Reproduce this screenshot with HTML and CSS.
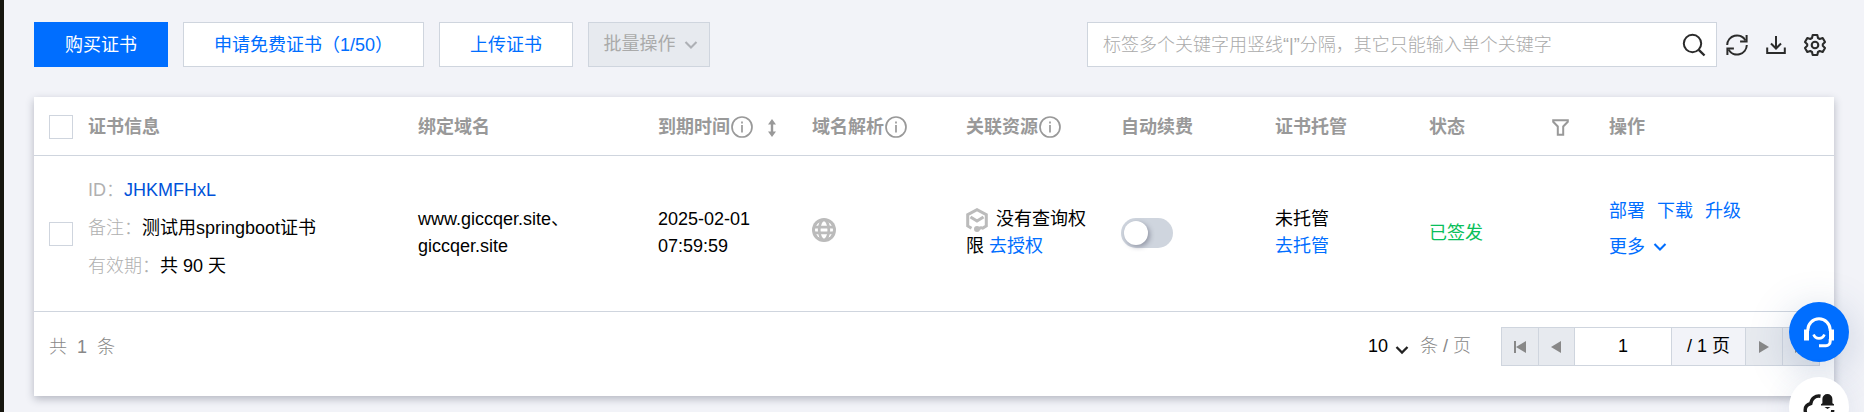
FILE: index.html
```html
<!DOCTYPE html>
<html lang="zh-CN">
<head>
<meta charset="utf-8">
<title>证书管理</title>
<link rel="stylesheet" href="styles.css">
</head>
<body>
<main class="page">
  <div class="toolbar">
    <button class="btn btn-primary">购买证书</button>
    <button class="btn btn-free">申请免费证书（1/50）</button>
    <button class="btn">上传证书</button>
    <button class="btn btn-disabled">批量操作
      <svg width="14" height="10" viewBox="0 0 14 10"><path d="M1.5 2l5.5 5.5L12.5 2" fill="none" stroke="#adb0b5" stroke-width="2.1"/></svg>
    </button>
    <div class="search">
      <span>标签多个关键字用竖线“|”分隔，其它只能输入单个关键字</span>
      <svg width="24" height="24" viewBox="0 0 24 24" fill="none" stroke="#2b2b2b" stroke-width="2"><circle cx="10.5" cy="10.5" r="8.7"/><path d="M16.8 16.8l5.7 5.7" stroke-width="2.4"/></svg>
    </div>
    <svg class="tool t-refresh" width="24" height="24" viewBox="0 0 24 24" fill="none" stroke="#2b2b2b" stroke-width="2"><path d="M2.2 12A9.8 9.8 0 0 1 20.5 7.4"/><path d="M21.8 12A9.8 9.8 0 0 1 3.5 16.6"/><path d="M21.600 2v6.500h-6.500"/><path d="M2.400 22v-6.500h6.500"/></svg>
    <svg class="tool t-download" width="20" height="20" viewBox="0 0 20 20" fill="none" stroke="#2b2b2b" stroke-width="2"><path d="M1.200 12.500v5.500h17.600v-5.500"/><path d="M10 1v12.500M5 8.500l5 5 5-5"/></svg>
    <svg class="tool t-gear" width="24" height="24" viewBox="0 0 24 24" fill="none" stroke="#2b2b2b" stroke-width="2.100" stroke-linejoin="round"><path d="M9.700 2h4.600l.7 3 1.700 1 3-.9 2.300 4-2.200 2.100v1.600l2.200 2.100-2.300 4-3-.9-1.700 1-.7 3H9.700l-.7-3-1.700-1-3 .9-2.300-4 2.200-2.100v-1.600L2 9.100l2.300-4 3 .9 1.700-1z"/><circle cx="12" cy="12" r="3.300"/></svg>
  </div>

  <section class="card">
    <div class="row head">
      <div class="check"><i class="box"></i></div>
      <div>证书信息</div>
      <div>绑定域名</div>
      <div class="inline">到期时间<svg class="info" viewBox="0 0 22 22"><circle cx="11" cy="11" r="10"/><path d="M11 9v7.500M11 5.500v2"/></svg><svg class="sort" width="8" height="18" viewBox="0 0 8 18"><path d="M4 0l4 5.500H5.200v7H8L4 18l-4-5.500h2.800v-7H0z" fill="#999"/></svg></div>
      <div class="inline">域名解析<svg class="info" viewBox="0 0 22 22"><circle cx="11" cy="11" r="10"/><path d="M11 9v7.500M11 5.500v2"/></svg></div>
      <div class="inline">关联资源<svg class="info" viewBox="0 0 22 22"><circle cx="11" cy="11" r="10"/><path d="M11 9v7.500M11 5.500v2"/></svg></div>
      <div>自动续费</div>
      <div>证书托管</div>
      <div class="inline state">状态<svg width="17" height="17" viewBox="0 0 17 17"><path d="M1.200 1.200h14.600v1.600l-4.600 4.700v8.300H5.800V7.500L1.200 2.800z" fill="none" stroke="#999" stroke-width="2"/></svg></div>
      <div>操作</div>
    </div>

    <div class="row body">
      <div class="check"><i class="box"></i></div>
      <div class="details">
        <p><span class="label">ID：</span><a class="id">JHKMFHxL</a></p>
        <p><span class="label">备注：</span>测试用springboot证书</p>
        <p><span class="label">有效期：</span>共 90 天</p>
      </div>
      <div class="text">www.giccqer.site、<br>giccqer.site</div>
      <div class="text">2025-02-01<br>07:59:59</div>
      <div class="dns"><svg width="24" height="24" viewBox="0 0 24 24"><circle cx="12" cy="12" r="12" fill="#bbb"/><circle cx="12" cy="12" r="9" fill="#fff"/><g fill="none" stroke="#bbb" stroke-width="2.700"><ellipse cx="12" cy="12" rx="4.800" ry="10"/><path d="M2 9.200h20M2 14.800h20"/></g></svg></div>
      <div class="text"><svg class="cube" width="22" height="24" viewBox="0 0 22 24" fill="none" stroke="#bbb" stroke-width="3"><path d="M5.500 20.300L1.700 18V6.700L11 1.700l9.300 5V18l-4.500 2.600"/><path d="M4.500 9l6.500 4 6.500-4"/><circle cx="11" cy="21" r="3" fill="#bbb" stroke="none"/><path d="M11 21l5-1.500"/></svg>没有查询权<br>限 <a class="link">去授权</a></div>
      <div><span class="switch"><i></i></span></div>
      <div class="text">未托管<br><a class="link">去托管</a></div>
      <div class="ok">已签发</div>
      <div class="ops">
        <div><a class="link">部署</a><a class="link">下载</a><a class="link">升级</a></div>
        <div><a class="link">更多</a><svg width="14" height="10" viewBox="0 0 14 10"><path d="M1.500 2L7 7.500 12.500 2" fill="none" stroke="#006eff" stroke-width="2.100"/></svg></div>
      </div>
    </div>

    <div class="footer">
      <div class="total"><span>共</span><span>1</span><span>条</span></div>
      <div class="size"><span class="num">10</span><svg width="14" height="10" viewBox="0 0 14 10"><path d="M1.500 2L7 7.500 12.500 2" fill="none" stroke="#222" stroke-width="2.300"/></svg><span>条 / 页</span></div>
      <div class="pager">
        <span class="pg"><svg width="12" height="12" viewBox="0 0 12 12"><path d="M0 0h2v12H0zM12 0v12L2 6z" fill="#888"/></svg></span>
        <span class="pg"><svg width="10" height="12" viewBox="0 0 10 12"><path d="M10 0v12L0 6z" fill="#888"/></svg></span>
        <span class="current">1</span>
        <span class="pages">/ 1 页</span>
        <span class="pg"><svg width="10" height="12" viewBox="0 0 10 12"><path d="M0 0v12l10-6z" fill="#888"/></svg></span>
        <span class="pg"><svg width="12" height="12" viewBox="0 0 12 12"><path d="M10 0h2v12h-2zM0 0v12l10-6z" fill="#888"/></svg></span>
      </div>
    </div>
  </section>

  <aside class="float">
    <div class="bubble service"><svg width="32" height="32" viewBox="0 0 32 32" fill="none" stroke="#fff" stroke-width="3"><path d="M4.800 14V13a11.200 11.200 0 0 1 22.400 0V14"/><path d="M1 12.500h5v11H1zM26 12.500h5v11h-5z" fill="#fff" stroke="none"/><path d="M27.200 22v2.500a4.300 4.300 0 0 1-4.300 4.300H16"/><path d="M10.600 17.500a5.700 5.700 0 0 0 10.800 0" stroke-width="2.600"/></svg></div>
    <div class="bubble"><svg width="32" height="26" viewBox="0 0 32 26"><path d="M17.500 3.200c-5-.8-9 2-9.700 7.300C4 11.500 2 14 2.200 17.500c.2 4 3 6.500 7 6.500h14c4 0 6.500-3 6.500-7" fill="none" stroke="#1a1a1a" stroke-width="3.400"/><path d="M18 12.500v-1.300l1.400-1V6a5 5 0 0 1 10 0v4.200l1.600 1v1.300zM21.500 14h6L24.500 16z" fill="#1a1a1a"/></svg></div>
  </aside>
</main>
</body>
</html>
```
FILE: styles.css
```css
* { box-sizing: border-box; }
body {
  margin: 0;
  height: 412px;
  overflow: hidden;
  background: #f2f3f8;
  color: #000;
  font: 400 18px/27px "Liberation Sans", "Noto Sans CJK SC", sans-serif;
}
p { margin: 0; }
svg { display: block; flex: none; }
.page {
  position: relative;
  height: 412px;
  overflow: hidden;
  padding: 22px 30px 0;
  border-left: 4px solid #17160f;
}

.toolbar { display: flex; align-items: center; height: 45px; }
.btn {
  display: flex;
  align-items: center;
  justify-content: center;
  width: 134px;
  height: 45px;
  margin: 0 15px 0 0;
  padding: 2px 0 0;
  border: 1px solid #cfd5de;
  background: #fff;
  color: #006eff;
  font: inherit;
  white-space: nowrap;
}
.btn-primary { background: #006eff; border-color: #006eff; color: #fff; }
.btn-free { width: 241px; }
.btn-disabled {
  width: 122px;
  gap: 8px;
  margin: 0;
  padding: 0 0 0 3px;
  background: #e7eaef;
  color: #aaa;
}
.search {
  display: flex;
  align-items: center;
  justify-content: space-between;
  width: 630px;
  height: 45px;
  margin-left: auto;
  padding: 0 10px 0 15px;
  border: 1px solid #cfd5de;
  background: #fff;
  color: #aaa;
  font-weight: 300;
}
.search span { padding-top: 2px; }
.t-refresh { margin-left: 8px; }
.t-download { margin-left: 17px; }
.t-gear { margin: 0 7px 0 17px; }

.card {
  height: 299px;
  margin-top: 30px;
  background: #fff;
  box-shadow: 0 3px 8px rgba(54, 58, 80, .32);
}
.row {
  display: grid;
  grid-template-columns: 54px 330px 240px 154px 154px 155px 154px 154px 180px 1fr;
  align-items: center;
  border-bottom: 1px solid #cfd5de;
}
.head { height: 59px; padding-top: 2px; color: #999; font-weight: 700; }
.body { height: 156px; }
.check { padding-left: 15px; }
.box { display: block; width: 24px; height: 24px; border: 1px solid #cfd5de; background: #fff; }
.head .box { margin-top: -1px; }
.body .box { margin-top: 1px; }
.text { padding-bottom: 2px; }
.inline { display: flex; align-items: center; }
.info { width: 22px; height: 22px; margin-left: 1px; fill: none; stroke: #999; stroke-width: 1.700; }
.sort { margin: 1px 0 0 15px; }
.state svg { margin-left: 87px; }
.details { line-height: 38px; padding-bottom: 11px; }
.label { color: #b0b0b0; font-weight: 300; }
.id { color: #0052d9; }
.dns { padding-bottom: 8px; }
.cube { display: inline-block; margin: 0 8px -7px 0; vertical-align: baseline; }
.link { color: #006eff; }
.ok { color: #0abf5b; }
.switch {
  display: block;
  width: 52px;
  height: 30px;
  margin-bottom: 2px;
  padding: 3px;
  border-radius: 15px;
  background: #cfd5de;
}
.switch i {
  display: block;
  width: 24px;
  height: 24px;
  border-radius: 50%;
  background: #fff;
  box-shadow: 2px 2px 5px rgba(54, 58, 80, .4);
}
.ops { line-height: 36px; padding-bottom: 9px; }
.ops div { display: flex; align-items: center; gap: 12px; }
.ops div + div { gap: 8px; }

.footer { display: flex; padding: 15px 14px 0 15px; color: #888; font-weight: 300; }
.total { display: flex; gap: 10px; line-height: 41px; }
.size { display: flex; align-items: center; height: 39px; margin-left: auto; }
.size .num { color: #000; }
.size svg { margin: 7px 11px 0 7px; }
.pager { display: flex; height: 39px; margin-left: 30px; border: 1px solid #cfd5de; color: #000; font-weight: 400; }
.pager span { display: flex; align-items: center; justify-content: center; border-right: 1px solid #cfd5de; }
.pager span:last-child { border-right: 0; }
.pg { width: 36.500px; background: #e7eaef; }
.current { width: 97px; }
.pages { width: 74px; background: #f2f3f8; }

.float { position: absolute; left: 1785px; top: 302px; display: grid; gap: 15px; }
.bubble {
  display: flex;
  justify-content: center;
  width: 60px;
  height: 60px;
  padding-top: 16px;
  border-radius: 50%;
  background: #fff;
  box-shadow: 0 5px 30px rgba(54, 88, 140, .1);
}
.service { background: #006eff; padding-top: 15px; box-shadow: 0 8px 40px rgba(54, 88, 140, .25); }
```
